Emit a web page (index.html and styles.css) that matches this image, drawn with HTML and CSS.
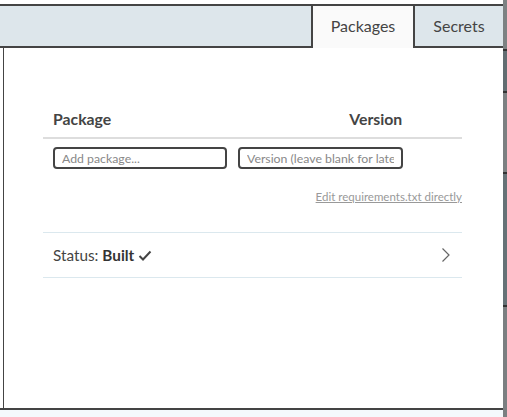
FILE: index.html
```html
<!DOCTYPE html>
<html>
<head>
<meta charset="utf-8">
<link rel="stylesheet" href="styles.css">
</head>
<body>
<div class="app">
  <div class="main">
    <div class="topgap"></div>
    <div class="tabbar">
      <div class="tabfill"></div>
      <div class="tab active">Packages</div>
      <div class="tab">Secrets</div>
    </div>
    <div class="panel">
      <div class="content">
        <div class="thead">
          <div class="th pkg">Package</div>
          <div class="th ver">Version</div>
          <div class="th act"></div>
        </div>
        <div class="inrow">
          <input class="in pkg-in" placeholder="Add package...">
          <input class="in ver-in" placeholder="Version (leave blank for latest)">
          <div class="act"></div>
        </div>
        <div class="linkrow"><a class="edit" href="#">Edit requirements.txt directly</a></div>
        <div class="status">
          <span class="stxt">Status: <b>Built</b></span>
          <svg class="check" width="14" height="12" viewBox="0 0 14 12"><polyline points="1.5,6 5,9.5 12.5,1.5" fill="none" stroke="#444" stroke-width="2"/></svg>
          <span class="spacer"></span>
          <svg class="chev" width="10" height="16" viewBox="0 0 10 16"><polyline points="1.5,1.5 8,8 1.5,14.5" fill="none" stroke="#666" stroke-width="1.2"/></svg>
        </div>
      </div>
    </div>
    <div class="footer"></div>
  </div>
  <div class="scroll">
    <div class="seg s1"></div>
    <div class="seg s2"></div>
    <div class="seg s3"></div>
    <div class="seg s4"></div>
    <div class="seg s5"></div>
  </div>
</div>
</body>
</html>
```
FILE: styles.css
```css
html, body { margin: 0; padding: 0; }
body {
  width: 507px;
  height: 417px;
  overflow: hidden;
  font-family: Lato, "Open Sans", sans-serif;
  color: #444;
  background: #fff;
}
.app { display: flex; height: 417px; }
.main { width: 503px; display: flex; flex-direction: column; }
.topgap { height: 4px; background: #fff; }
.tabbar {
  display: flex;
  height: 42px;
  border-top: 2px solid #444;
  background: #dde6eb;
}
.tabfill { flex: 1; border-bottom: 2px solid #444; }
.tab {
  box-sizing: border-box;
  height: 42px;
  font-size: 16px;
  color: #444;
  display: flex;
  align-items: center;
  justify-content: center;
  padding-bottom: 4px;
}
.tab.active {
  width: 104px;
  background: #fafafa;
  border-left: 2px solid #444;
  border-right: 2px solid #444;
}
.tab:not(.active) {
  width: 88px;
  border-bottom: 2px solid #444;
  padding-bottom: 2px;
}
.panel {
  flex: 1;
  margin-left: 3px;
  border-left: 1px solid #444;
  background: #fff;
}
.content {
  width: 419px;
  margin: 53px 0 0 39px;
}
.thead {
  display: flex;
  gap: 10px;
  padding: 8px 0 8px 10px;
  border-bottom: 2px solid #ddd;
  font-weight: bold;
  font-size: 15.8px;
  line-height: 20px;
}
.pkg { width: 176px; }
.ver { width: 165px; text-align: right; }
.act { width: 50px; }
.inrow {
  display: flex;
  gap: 10px;
  padding: 8px 0 0 10px;
}
.in {
  box-sizing: border-box;
  height: 22px;
  margin: 0;
  border: 2px solid #444;
  border-radius: 4px;
  padding: 0 7px;
  font-family: Lato, "Open Sans", sans-serif;
  font-size: 12.3px;
  color: #444;
  background: #fff;
  outline: none;
}
.in::placeholder { color: #888; }
.pkg-in { width: 176px; }
.ver-in { width: 165px; margin-left: 1px; }
.linkrow {
  text-align: right;
  padding-top: 19px;
  line-height: 14px;
  height: 14px;
}
.edit {
  font-size: 11.5px;
  color: #999;
  text-decoration: underline;
}
.status {
  margin-top: 30px;
  height: 44px;
  border-top: 1px solid #dbe8ee;
  border-bottom: 1px solid #dbe8ee;
  display: flex;
  align-items: center;
  padding: 0 10px;
  font-size: 15.3px;
}
.stxt b { font-weight: bold; color: #333; }
.check { margin-left: 4px; margin-top: 1px; }
.spacer { flex: 1; }
.chev { margin-right: 1px; }
.footer {
  height: 7px;
  border-top: 2px solid #444;
  background: #f4f9fc;
}
.scroll {
  width: 4px;
  display: flex;
  flex-direction: column;
  background: #767b7d;
}
.seg { border-bottom: 2px solid #333; }
.s1 { height: 49px; background: #7d8283; }
.s2 { height: 40px; background: #626d72; }
.s3 { height: 79px; background: #7c8082; }
.s4 { height: 131px; background: #667277; }
.s5 { flex: 1; background: #7b7f81; border-bottom: none; }
```
